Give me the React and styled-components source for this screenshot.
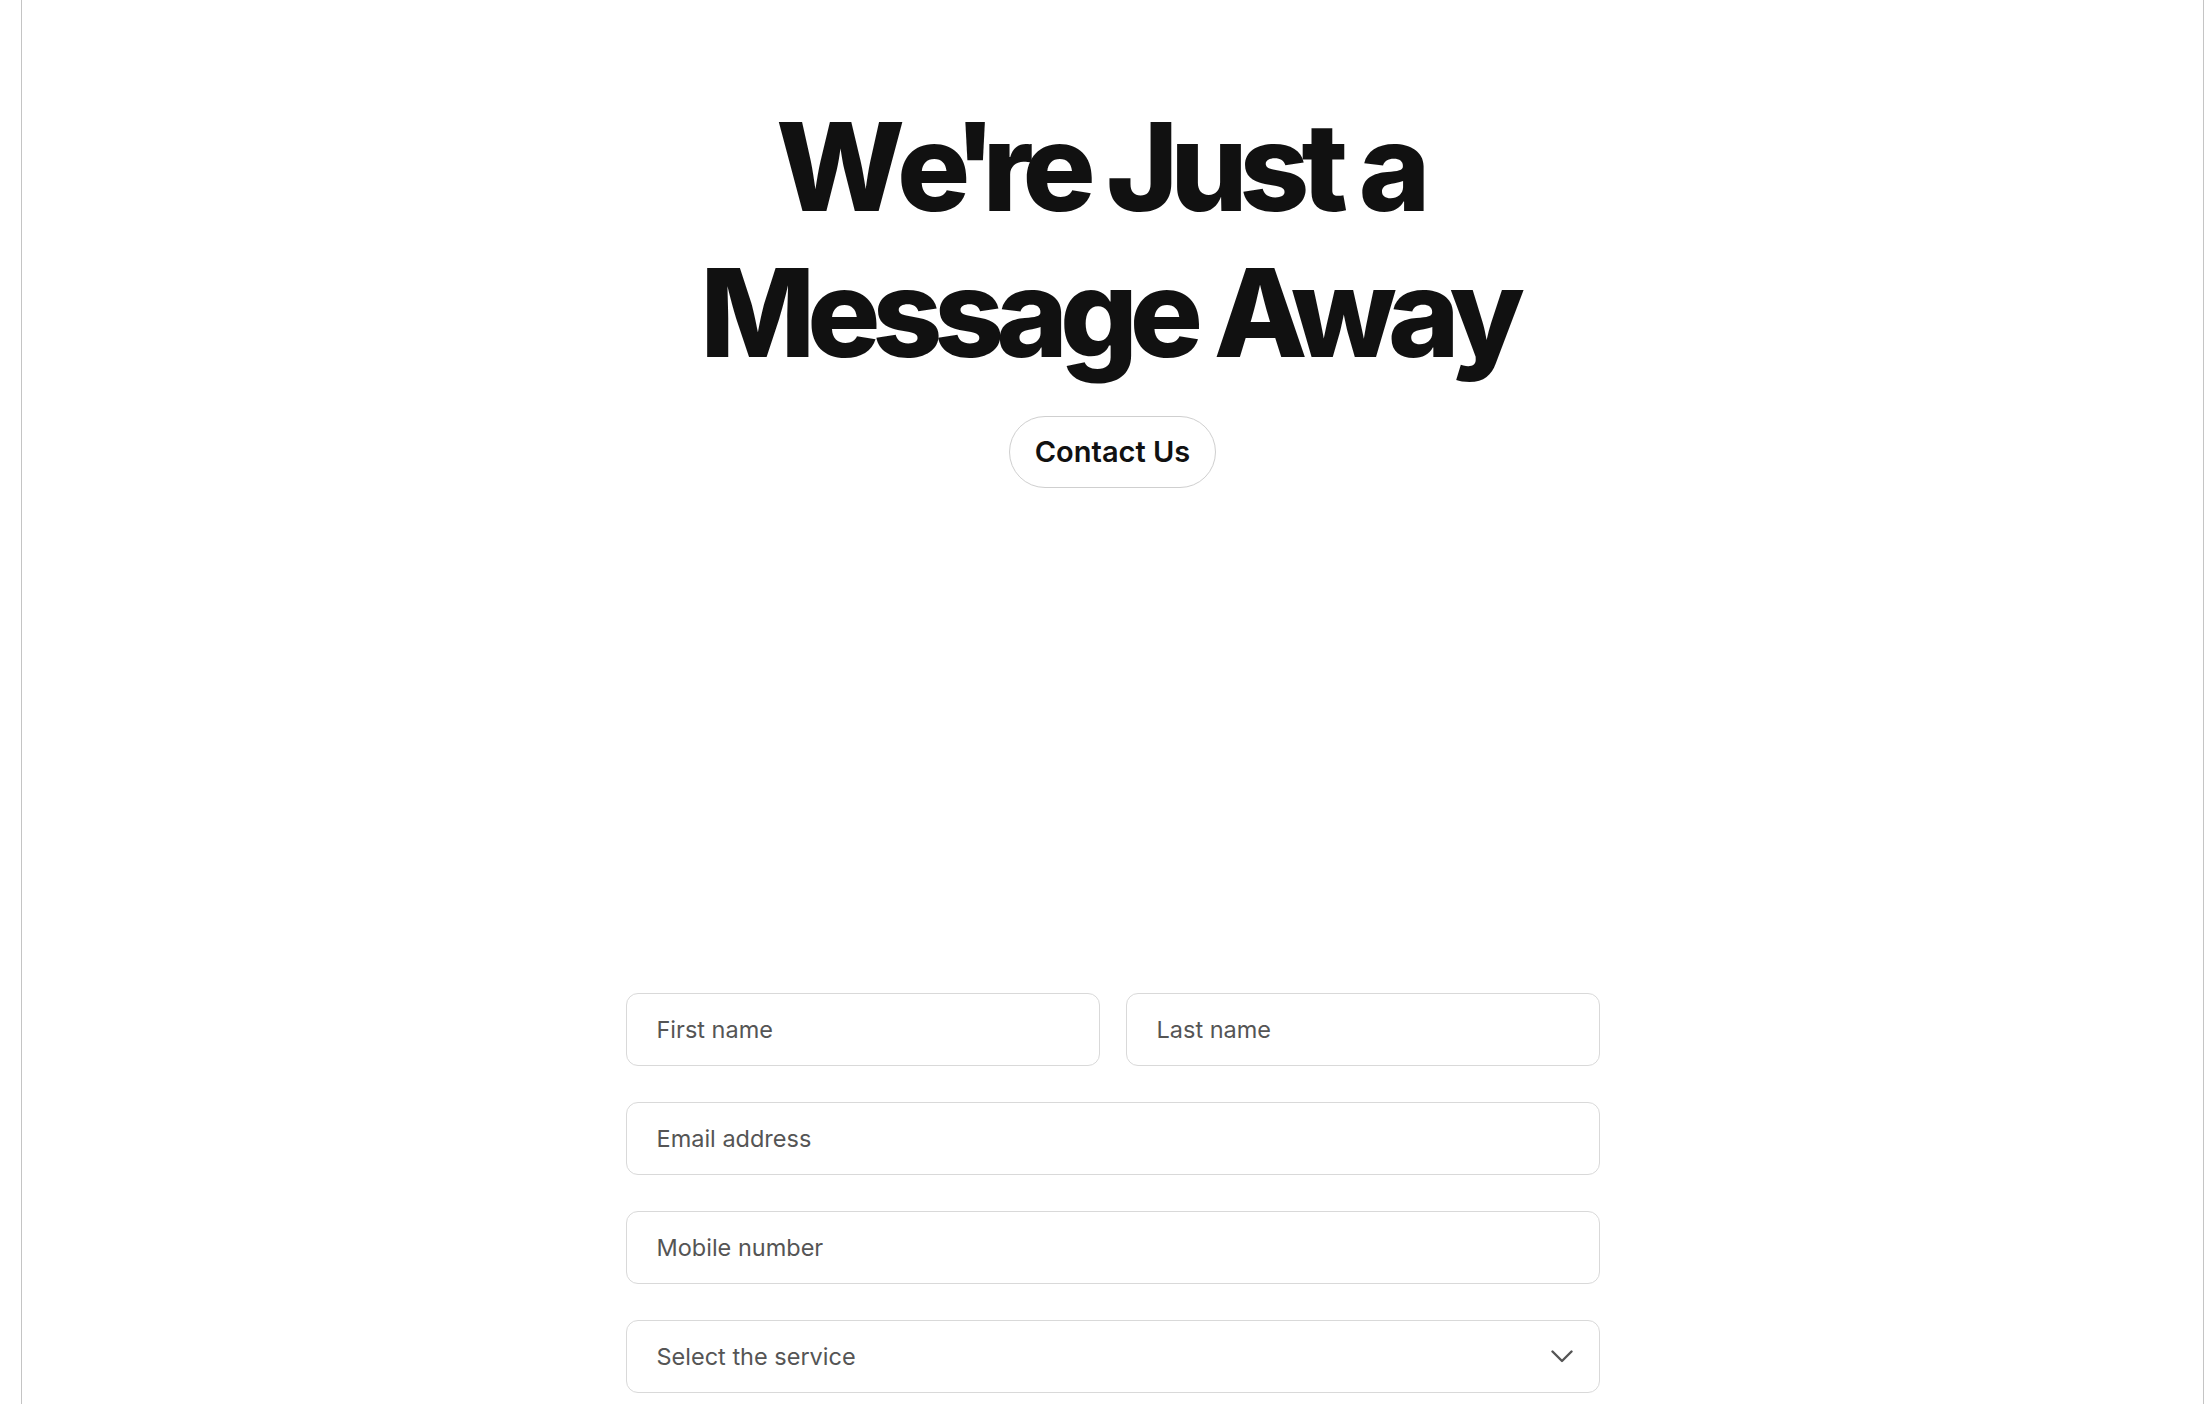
import styled, { createGlobalStyle } from 'styled-components';

const GlobalStyle = createGlobalStyle`
    html, body {
        margin: 0;
        padding: 0;
        background: #ffffff;
        font-family: Inter, "Noto Sans", "Liberation Sans", sans-serif;
        color: #111111;
    }
    * {
        box-sizing: border-box;
    }
`;

const Page = styled.main`
    min-height: 100vh;
    margin: 0 8px 0 21px;
    border-left: 1px solid #c4c4c4;
    border-right: 1px solid #c4c4c4;
    padding-top: 94px;
    display: flex;
    flex-direction: column;
    align-items: center;
`;

const Title = styled.h1`
    margin: 0;
    padding-right: 8px;
    font-size: 122px;
    line-height: 1.2;
    font-weight: 800;
    letter-spacing: -0.066em;
    text-align: center;
    color: #111111;
`;

// the apostrophe sits tighter in the design than Inter sets it
const Tight = styled.span`
    letter-spacing: -0.116em;
`;

const Pill = styled.button`
    margin-top: 29px;
    height: 72px;
    padding: 0 25px;
    border: 1px solid #cfcfcf;
    border-radius: 999px;
    background: #ffffff;
    font-family: inherit;
    font-size: 29px;
    font-weight: 600;
    color: #111111;
    cursor: pointer;
`;

const Form = styled.form`
    margin-top: 505px;
    width: 974px;
    display: flex;
    flex-direction: column;
    gap: 36px;
`;

const Row = styled.div`
    display: grid;
    grid-template-columns: 1fr 1fr;
    gap: 26px;
`;

const Field = styled.input`
    height: 73px;
    width: 100%;
    padding: 0 30px;
    border: 1px solid #d9d9d9;
    border-radius: 12px;
    font-family: inherit;
    font-size: 23.5px;
    color: #111111;
    outline: none;

    &::placeholder {
        color: #555555;
    }
`;

const SelectBox = styled.div`
    height: 73px;
    padding: 0 26px 0 30px;
    border: 1px solid #d9d9d9;
    border-radius: 12px;
    display: flex;
    align-items: center;
    justify-content: space-between;
    font-size: 23.5px;
    color: #555555;
`;

const Chevron = () => (
    <svg width="22" height="13" viewBox="0 0 22 13" fill="none" stroke="#555555" strokeWidth="2.4" strokeLinecap="round" strokeLinejoin="round">
        <path d="M1.5 1.5L11 11L20.5 1.5" />
    </svg>
);

const App = () => {
    return (
        <>
            <GlobalStyle />
            <Page>
                <Title>
                    W<Tight>e'</Tight>re Just a{'\u00a0'}
                    <br />
                    Message Away
                </Title>
                <Pill type="button">Contact Us</Pill>
                <Form onSubmit={(e) => e.preventDefault()}>
                    <Row>
                        <Field placeholder="First name" />
                        <Field placeholder="Last name" />
                    </Row>
                    <Field type="email" placeholder="Email address" />
                    <Field type="tel" placeholder="Mobile number" />
                    <SelectBox>
                        <span>Select the service</span>
                        <Chevron />
                    </SelectBox>
                </Form>
            </Page>
        </>
    );
};

export default App;
